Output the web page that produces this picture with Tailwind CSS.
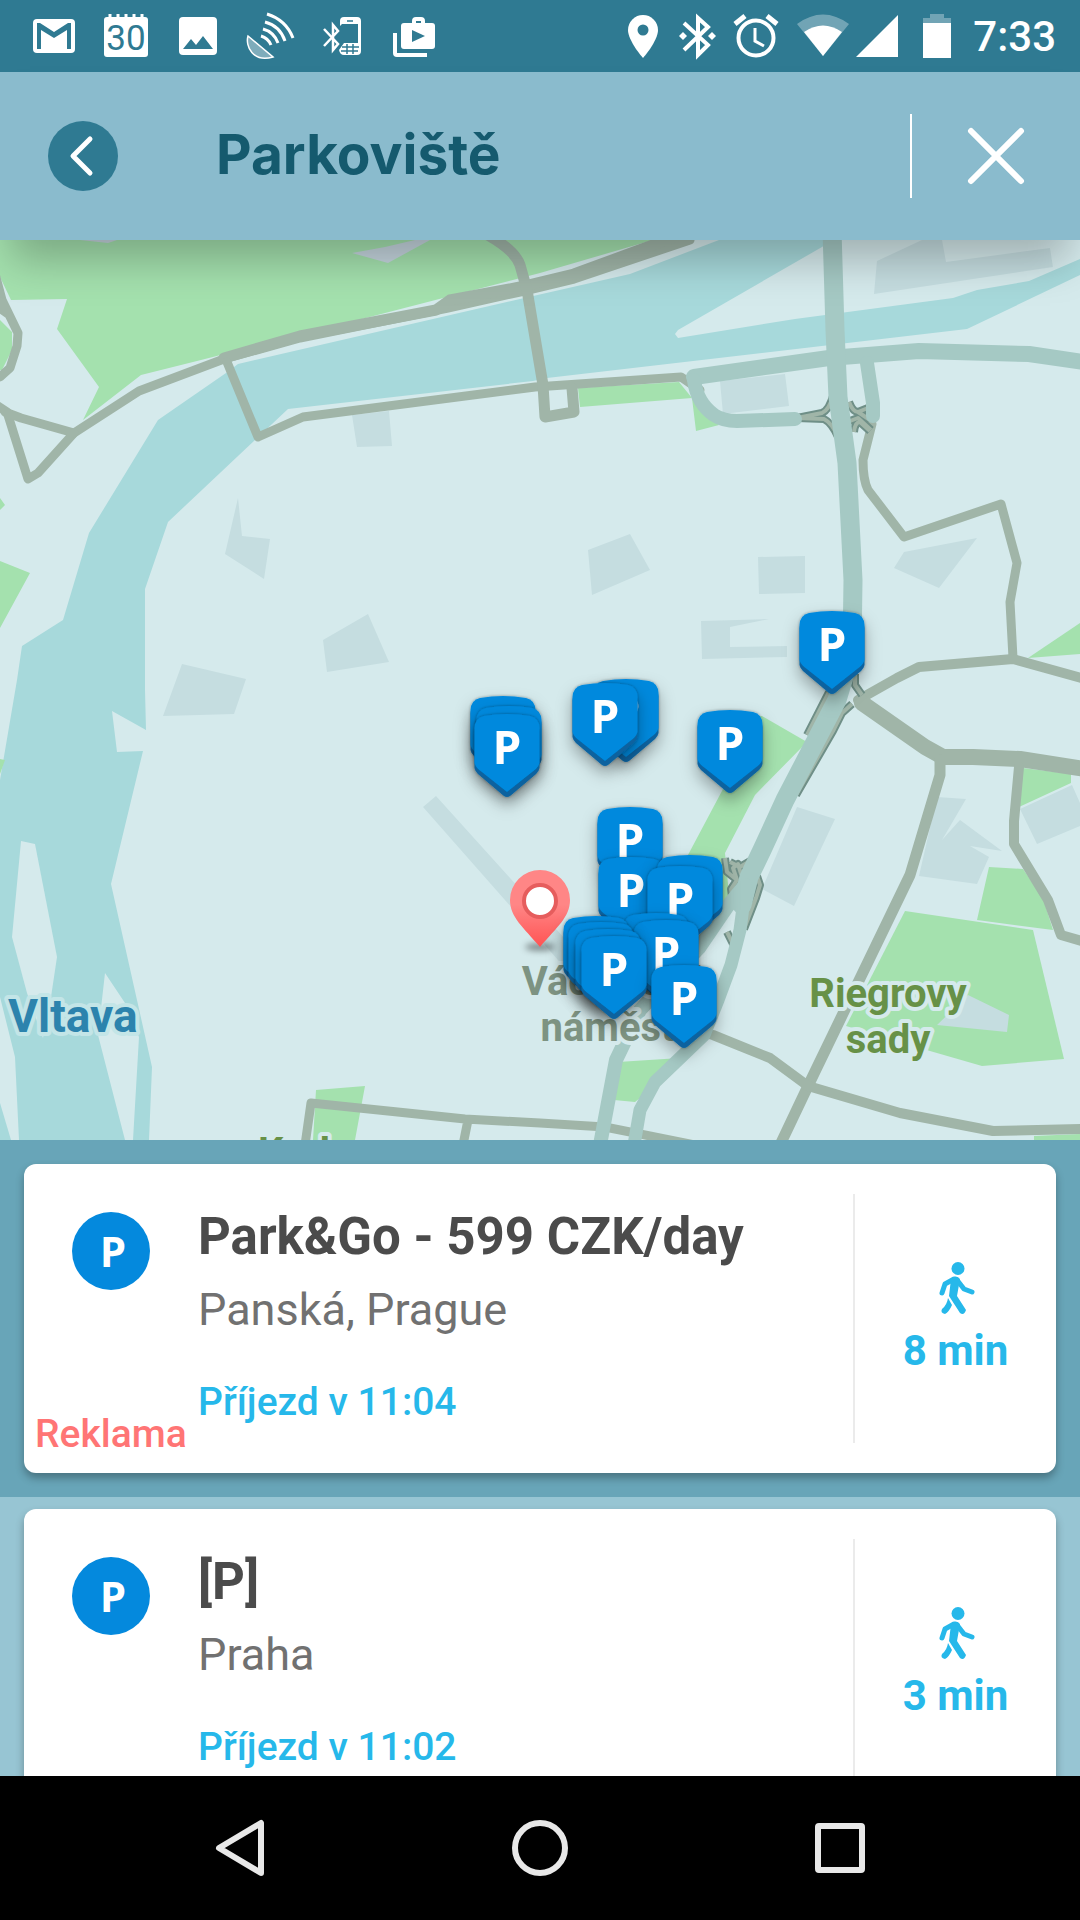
<!DOCTYPE html>
<html lang="cs">
<head>
    <meta charset="UTF-8">
    <meta name="viewport" content="width=device-width, initial-scale=1.0">
    <title>Parkoviště</title>
    <script src="https://cdn.jsdelivr.net/npm/@tailwindcss/browser@4"></script>
</head>
<body class="h-screen flex flex-col overflow-hidden bg-[#97c5d3] font-[Roboto,sans-serif]">

    <!-- Status bar -->
    <div class="h-[72px] shrink-0 flex items-center justify-between bg-[#2f7a92] pl-[18px] pr-6 text-white">
        <div class="flex">
            <svg class="w-[72px] h-[72px]" viewBox="0 0 72 72">
                <rect x="15" y="19" width="42" height="34" rx="4" fill="#fff"/>
                <path d="M19 49V23H22L36 32 50 23H53V49H49V30L36 38 23 30V49Z" fill="#2f7a92"/>
            </svg>
            <svg class="w-[72px] h-[72px]" viewBox="0 0 72 72">
                <rect x="14" y="17" width="44" height="40" rx="3" fill="#fff"/>
                <path d="M20 14V18M28 14V18M36 14V18M44 14V18M52 14V18" stroke="#fff" stroke-width="3"/>
                <text x="36" y="50" text-anchor="middle" font-size="35" fill="#2f7a92">30</text>
            </svg>
            <svg class="w-[72px] h-[72px]" viewBox="0 0 72 72">
                <rect x="17" y="17" width="38" height="38" rx="4" fill="#fff"/>
                <path d="M21 49 29 39 34 45 41 36 51 49Z" fill="#2f7a92"/>
            </svg>
            <svg class="w-[72px] h-[72px]" viewBox="0 0 72 72" fill="none" stroke="#fff">
                <path d="M14 36C11 46 19 63 39 57Z" fill="#fff" fill-opacity=".38" stroke-width="1.5"/>
                <path d="M27 36Q34 38 37 45M29 29Q40 32 44 43M31 22Q46 26 51 41M33 14Q52 20 59 38" stroke-width="3"/>
            </svg>
            <svg class="w-[72px] h-[72px]" viewBox="0 0 72 72" fill="none" stroke="#fff">
                <path d="M18 46 32 31 27 25V50L32 44 18 29" stroke-width="2.5"/>
                <path d="M34 26V21Q34 17 38 17H51Q55 17 55 21V51Q55 55 51 55H38Q34 55 33 50L38 43H52V24H36Z" fill="#fff" stroke="none"/>
                <path d="M36 24H52V43H38V38L36 36Z" fill="#2f7a92" stroke="none"/>
                <path d="M41 21H47M36 47H53M35 51H52M41 44V54M47 44V54" stroke="#2f7a92" stroke-width="1.5"/>
            </svg>
            <svg class="w-[72px] h-[72px]" viewBox="0 0 72 72">
                <path d="M17 33V53Q17 55 19 55H49" fill="none" stroke="#fff" stroke-width="4"/>
                <rect x="23" y="23" width="34" height="26" rx="3" fill="#fff"/>
                <path d="M36 25V21Q36 19 38 19H43Q45 19 45 21V25" fill="none" stroke="#fff" stroke-width="4"/>
                <path d="M34 30 47 36 34 42Z" fill="#2f7a92"/>
            </svg>
        </div>
        <div class="flex items-center">
            <svg class="w-[54px] h-[72px]" viewBox="0 0 54 72">
                <path d="M27 15A15 15 0 0 0 12 30C12 41 27 58 27 58S42 41 42 30A15 15 0 0 0 27 15Z" fill="#fff"/>
                <circle cx="27" cy="30" r="5.5" fill="#2f7a92"/>
            </svg>
            <svg class="w-[54px] h-[72px]" viewBox="0 0 54 72" fill="#fff">
                <path d="M14 50 38 27 28 18V55L38 45 14 23" fill="none" stroke="#fff" stroke-width="4"/>
                <path d="M13 32 17 36 13 40 9 36ZM42 32 46 36 42 40 38 36Z"/>
            </svg>
            <svg class="w-[64px] h-[72px]" viewBox="0 0 64 72" fill="none" stroke="#fff" stroke-width="4">
                <circle cx="32" cy="38" r="17.5"/>
                <path d="M31 28V41L40 46" stroke-width="3"/>
                <path d="M11 24 21 16M43 16 53 24" stroke-width="5"/>
            </svg>
            <svg class="w-[64px] h-[72px]" viewBox="0 0 64 72" fill="#fff">
                <path d="M35 56 9 24Q35 5 61 24Z" fill-opacity=".32"/>
                <path d="M35 56 16 32Q35 19 54 32Z"/>
            </svg>
            <svg class="w-[54px] h-[72px]" viewBox="0 0 54 72"><path d="M4 57H46V15Z" fill="#fff"/></svg>
            <svg class="w-[67px] h-[72px]" viewBox="0 0 67 72" fill="#fff">
                <path d="M17 23V18H24V14H38V18H45V23Z" fill-opacity=".32"/>
                <path d="M17 23H45V58H17Z"/>
            </svg>
            <span class="pt-0.5 text-[42px] leading-[50px] font-medium">7:33</span>
        </div>
    </div>

    <!-- App header -->
    <header class="relative z-10 h-[168px] shrink-0 flex items-center bg-[#8abbcd] pl-12 shadow-[0_30px_40px_-10px_rgba(0,0,0,0.25)]">
        <button type="button" aria-label="Zpět" class="w-[70px] h-[70px] rounded-full bg-[#2f7a92]">
            <svg viewBox="0 0 70 70" fill="none" stroke="#fff" stroke-width="5" stroke-linecap="round" stroke-linejoin="round">
                <path d="M42 18 25 35 42 52"/>
            </svg>
        </button>
        <h1 class="flex-1 pl-[98px] pb-1 font-[Inter,sans-serif] text-[55px] leading-[72px] font-bold text-[#155a6e]">Parkoviště</h1>
        <button type="button" aria-label="Zavřít" class="w-[170px] h-[84px] border-l-2 border-white flex items-center justify-center">
            <svg class="w-[60px] h-[60px]" viewBox="0 0 60 60" stroke="#fff" stroke-width="6" stroke-linecap="round">
                <path d="M5 5 55 55M55 5 5 55"/>
            </svg>
        </button>
    </header>

    <!-- Map -->
    <main class="h-[900px] shrink-0 bg-[#d5eaec]">
        <svg class="w-full h-full" viewBox="0 240 1080 900" preserveAspectRatio="xMidYMid slice">
            <defs>
                <linearGradient id="pinFill" x1="0" y1="0" x2="0" y2="1">
                    <stop offset=".45" stop-color="#ff8686"/>
                    <stop offset="1" stop-color="#ff5353"/>
                </linearGradient>
                <filter id="drop" x="-50%" y="-30%" width="200%" height="180%">
                    <feDropShadow dx="0" dy="0" stdDeviation="1.5" flood-opacity=".35"/>
                    <feDropShadow dx="0" dy="8" stdDeviation="8" flood-opacity=".3"/>
                </filter>
                <filter id="soft" x="-50%" y="-100%" width="200%" height="300%">
                    <feGaussianBlur stdDeviation="3"/>
                </filter>
                <g id="parking" filter="url(#drop)">
                    <path d="M-32.5 17Q-32 8 -23 6Q0 2 23 6Q32 8 32.5 17V54Q32 57 29 60L3 82Q0 84 -3 82L-29 60Q-32 57 -32.5 54Z" fill="#08629f"/>
                    <path d="M-32.5 14Q-32 4 -23 2Q0 -2 23 2Q32 4 32.5 14V49Q32 52 29 55L0 78 -29 55Q-32 52 -32.5 49Z" fill="#0489dd"/>
                    <text x="0" y="50" text-anchor="middle" font-family="Open Sans, sans-serif" font-weight="700" font-size="46" fill="#fff">P</text>
                </g>
                <g id="ramps">
                    <path d="M797 418 822 413Q829 410 833 396M797 418 824 419Q832 423 838 437"/>
                    <path d="M849 402Q853 412 858 412L868 408M850 421 858 418 871 430M854 432Q855 422 860 422L870 431M858 412 870 420"/>
                    <path d="M855 674 855 685 862 695M852 704 842 713 833 731 796 795M829 692 807 735"/>
                    <path d="M725 858 727 872 737 880 731 889 733 903M737 880 733 868 738 864 741 874 749 871M730 862 740 867 752 860"/>
                    <path d="M757 876 760 885 756 898 744 929M727 932 733 944"/>
                </g>
            </defs>

            <!-- water -->
            <g fill="#a7d9db">
                <path d="M719 240H832L822 247 678 330 675 334 678 338 795 319 953 298 977 290 1029 281 1080 259V275L967 329 547 378 533 381 288 409 255 440 168 522 145 589V690L146 730 112 711 117 752 143 751 111 884 152 1067 149 1140H133L139 1037 125 1003 105 973 98 1035 125 1140H19L15 1057 0 997V780L17 680 22 646 63 620 89 533 158 420 226 373 238 364 520 299 630 274Z"/>
                <path d="M0 1103 11 1140H0Z"/>
            </g>
            <path d="M21 841 35 844 57 957 51 997 43 1038 27 993 12 937Z" fill="#d5eaec"/>

            <!-- parks -->
            <g fill="#a4e1ae">
                <path d="M0 240H653L540 273 358 320 201 360 141 375 83 420 99 387 57 329 67 299 11 300 0 277Z"/>
                <path d="M0 320 12 332V350L2 370H0ZM0 498 5 505 0 510ZM0 561 30 573 0 628ZM0 759 5 760 0 774Z"/>
                <path d="M578 388 679 382 692 398 719 425 696 431 692 398 580 407Z"/>
                <path d="M1028 658 1080 623V654Z"/>
                <path d="M740 716H762L807 742 755 795 725 853 730 905 690 930 680 870 723 789Z"/>
                <path d="M1023 768 1071 774V783L1019 807ZM989 867 1023 869 1043 898 1053 930 977 920Z"/>
                <path d="M905 911 1033 930 1064 1059 982 1066 930 1051 846 1026Z"/>
                <path d="M1034 1136 1080 1134V1140H1034ZM316 1090 365 1086 355 1140H313ZM618 1062 680 1058 650 1090 635 1102 614 1100Z"/>
            </g>

            <!-- built-up blocks -->
            <g fill="#c5dde0">
                <path d="M80 240H117L108 243ZM352 253 385 247 415 240H430L388 263Z" fill="#c5d5de"/>
                <path d="M352 415 389 411 392 446 357 447ZM238 498 242 536 270 539 264 579 225 554Z"/>
                <path d="M368 614 389 662 327 672 323 640ZM182 664 246 679 234 714 163 716Z"/>
                <path d="M922 240H942L946 262 1050 248 1053 267 874 294 877 261ZM720 381 785 374 789 406 723 414Z"/>
                <path d="M588 550 630 534 650 570 592 595ZM758 557 805 556V593L759 594ZM904 552 977 538 939 588 894 568Z"/>
                <path d="M701 621 769 619 730 627V647L787 646V657L702 659Z"/>
                <path d="M436 796 423 807 565 968 575 950ZM797 807 835 819 794 906 762 889Z"/>
                <path d="M937 797 966 799 942 840 960 820 1002 851 970 846 989 857 977 884 919 876Z"/>
                <path d="M1020 809 1072 785 1080 803V826L1037 844ZM968 995 1009 1015 1007 1032 937 1025Z"/>
            </g>

            <!-- minor roads -->
            <g fill="none" stroke="#a0b5a8" stroke-width="9" stroke-linecap="round" stroke-linejoin="round">
                <path d="M-5 404 7 412 28 479 38 473 74 433 139 391 224 359 300 338 448 308 520 292 574 279 690 240"/>
                <path d="M224 358 300 336 436 310 450 300 520 287 574 274 680 235" stroke-width="11"/>
                <path d="M5 412 21 418 74 433"/>
                <path d="M-6 270 2 300 18 333 17 346 10 368 0 377M-4 305 8 314"/>
                <path d="M227 362 258 437 303 417 535 387 681 377 700 390"/>
                <path d="M486 234Q515 250 520 265L527 290 543 385 545 417 574 412 572 388" stroke-width="11"/>
                <path d="M872 424 863 460Q863 480 868 490L904 537 1001 504 1017 563 1010 602 1013 658"/>
                <path d="M858 700 897 678 919 667 1013 659 1085 679" stroke-width="10"/>
                <path d="M862 703 925 747 943 757 973 757 1020 759 1085 769" stroke-width="16"/>
                <path d="M940 760V775L910 875 808 1086 780 1145" stroke-width="11"/>
                <path d="M1019 767 1014 821V844L1048 900 1061 935 1085 942" stroke-width="10"/>
                <path d="M705 1033 713 1035 770 1058 808 1086 900 1113 993 1131 1085 1129" stroke-width="10"/>
                <path d="M305 1145 311 1103 465 1119 540 1123 605 1127 700 1146M468 1120 463 1145"/>
            </g>

            <!-- junction ramps -->
            <g fill="none" stroke-linejoin="round">
                <use href="#ramps" stroke="#6f8f87" stroke-width="8"/>
                <use href="#ramps" stroke="#a0b5a8" stroke-width="4"/>
            </g>

            <!-- main roads -->
            <g fill="none" stroke="#a5c9c4" stroke-linecap="round" stroke-linejoin="round">
                <path d="M694 377 829 358 919 351 1029 354 1090 363" stroke-width="16"/>
                <path d="M832 230 835 330 838 397 847 463 853 580 852 650 837 700 785 800 762 850 749 877 742 905" stroke-width="19"/>
                <path d="M694 380Q697 403 714 415Q723 421 737 421L795 419M867 363 873 403V416" stroke-width="14"/>
                <path d="M746 885 740 930 731 965 718 1000 704 1035 655 1082 640 1110 634 1145" stroke-width="13"/>
                <path d="M745 885 727 907 699 948 640 1010 616 1060 600 1145" stroke-width="14"/>
            </g>

            <!-- place names -->
            <g font-weight="700" font-size="40" stroke="#d5eaec" stroke-width="8" stroke-linejoin="round" paint-order="stroke">
                <text x="8" y="1032" font-size="46" fill="#2c83ad" stroke="#c3e5e7">Vltava</text>
                <g text-anchor="middle" fill="#679147">
                    <text x="888" y="1007">Riegrovy</text>
                    <text x="888" y="1053">sady</text>
                </g>
                <g text-anchor="middle" fill="#7d9382">
                    <text x="613" y="995">Václavské</text>
                    <text x="613" y="1041">náměstí</text>
                </g>
                <text x="258" y="1166" fill="#679147">Karlovo</text>
            </g>

            <!-- searched place -->
            <ellipse cx="540" cy="947" rx="15" ry="4" fill="#000" fill-opacity=".4" filter="url(#soft)"/>
            <path d="M540 870A30 30 0 0 0 510 900C510 917 523 927 540 947C557 927 570 917 570 900A30 30 0 0 0 540 870Z" fill="url(#pinFill)"/>
            <circle cx="540" cy="901" r="16" fill="#fff" stroke="#e65d5d" stroke-width="4"/>

            <!-- car parks -->
            <use href="#parking" x="503" y="696"/>
            <use href="#parking" x="509" y="706"/>
            <use href="#parking" x="507" y="714"/>
            <use href="#parking" x="626" y="679"/>
            <use href="#parking" x="605" y="683"/>
            <use href="#parking" x="730" y="710"/>
            <use href="#parking" x="832" y="611"/>
            <use href="#parking" x="630" y="807"/>
            <use href="#parking" x="631" y="857"/>
            <use href="#parking" x="690" y="855"/>
            <use href="#parking" x="680" y="866"/>
            <use href="#parking" x="656" y="913"/>
            <use href="#parking" x="666" y="920"/>
            <use href="#parking" x="596" y="916"/>
            <use href="#parking" x="601" y="922"/>
            <use href="#parking" x="608" y="929"/>
            <use href="#parking" x="614" y="936"/>
            <use href="#parking" x="684" y="965"/>
        </svg>
    </main>

    <!-- Results -->
    <div class="flex-1 min-h-0 overflow-hidden">
        <section class="bg-[#68a5b8] px-6 py-6">
            <a href="#" class="flex rounded-xl bg-white shadow-[0_5px_8px_rgba(0,0,0,0.3)]">
                <div class="w-[174px] shrink-0 flex flex-col justify-between pt-12 pb-4">
                    <span class="ml-12 w-[78px] h-[78px] rounded-full bg-[#0489dd] flex items-center justify-center pl-1 pb-0.5 font-[Open_Sans,sans-serif] text-[42px] font-bold text-white">P</span>
                    <span class="pl-[11px] text-[39px] leading-[46px] font-medium text-[#ff7575]">Reklama</span>
                </div>
                <div class="flex-1 pt-[43px] pb-12">
                    <h2 class="text-[51px] leading-[60px] font-bold text-[#4b4b4b]">Park&amp;Go - 599 CZK/day</h2>
                    <p class="mt-[15px] text-[45px] leading-[56px] text-[#717171]">Panská, Prague</p>
                    <p class="mt-[41px] text-[39px] leading-[46px] font-medium text-[#26b8ea]">Příjezd v 11:04</p>
                </div>
                <div class="w-[203px] my-[30px] shrink-0 flex flex-col items-center justify-center gap-3 border-l-2 border-[#ebebeb] text-[#26b8ea]">
                    <svg class="w-[40px] h-[52px]" viewBox="-3 0 40 52" fill="none" stroke="currentColor" stroke-width="5" stroke-linecap="round" stroke-linejoin="round">
                        <circle cx="19" cy="6.5" r="6.5" fill="currentColor" stroke="none"/>
                        <path d="M15 17 6 22 3 31M18 18 25 27 33 30"/>
                        <path d="M12 17Q17 12 21 17L18 34 27 48Q25 54 21 51L10 34Z" fill="currentColor" stroke="none"/>
                        <path d="M9 36 13 43Q10 50 6 52Q1 51 3 47Q8 43 9 36Z" fill="currentColor" stroke="none"/>
                    </svg>
                    <span class="text-[42px] leading-[50px] font-bold">8 min</span>
                </div>
            </a>
        </section>

        <section class="px-6 py-3">
            <a href="#" class="flex rounded-xl bg-white shadow-[0_5px_8px_rgba(0,0,0,0.3)]">
                <div class="w-[174px] shrink-0 pt-12 pb-4">
                    <span class="ml-12 w-[78px] h-[78px] rounded-full bg-[#0489dd] flex items-center justify-center pl-1 pb-0.5 font-[Open_Sans,sans-serif] text-[42px] font-bold text-white">P</span>
                </div>
                <div class="flex-1 pt-[43px] pb-12">
                    <h2 class="text-[51px] leading-[60px] font-bold text-[#4b4b4b]">[P]</h2>
                    <p class="mt-[15px] text-[45px] leading-[56px] text-[#717171]">Praha</p>
                    <p class="mt-[41px] text-[39px] leading-[46px] font-medium text-[#26b8ea]">Příjezd v 11:02</p>
                </div>
                <div class="w-[203px] my-[30px] shrink-0 flex flex-col items-center justify-center gap-3 border-l-2 border-[#ebebeb] text-[#26b8ea]">
                    <svg class="w-[40px] h-[52px]" viewBox="-3 0 40 52" fill="none" stroke="currentColor" stroke-width="5" stroke-linecap="round" stroke-linejoin="round">
                        <circle cx="19" cy="6.5" r="6.5" fill="currentColor" stroke="none"/>
                        <path d="M15 17 6 22 3 31M18 18 25 27 33 30"/>
                        <path d="M12 17Q17 12 21 17L18 34 27 48Q25 54 21 51L10 34Z" fill="currentColor" stroke="none"/>
                        <path d="M9 36 13 43Q10 50 6 52Q1 51 3 47Q8 43 9 36Z" fill="currentColor" stroke="none"/>
                    </svg>
                    <span class="text-[42px] leading-[50px] font-bold">3 min</span>
                </div>
            </a>
        </section>
    </div>

    <!-- System navigation -->
    <nav class="relative z-10 h-[144px] shrink-0 grid grid-cols-3 bg-black px-[90px]">
        <button type="button" aria-label="Zpět" class="flex items-center justify-center">
            <svg class="w-[60px] h-[60px]" viewBox="0 0 60 60" fill="none" stroke="#e8e8e8" stroke-width="6" stroke-linejoin="round">
                <path d="M51 5V55L9 30Z"/>
            </svg>
        </button>
        <button type="button" aria-label="Domů" class="flex items-center justify-center">
            <svg class="w-[60px] h-[60px]" viewBox="0 0 60 60" fill="none" stroke="#e8e8e8" stroke-width="6">
                <circle cx="30" cy="30" r="25"/>
            </svg>
        </button>
        <button type="button" aria-label="Přehled" class="flex items-center justify-center">
            <svg class="w-[60px] h-[60px]" viewBox="0 0 60 60" fill="none" stroke="#e8e8e8" stroke-width="6">
                <rect x="8" y="8" width="44" height="44" rx="1"/>
            </svg>
        </button>
    </nav>

</body>
</html>
